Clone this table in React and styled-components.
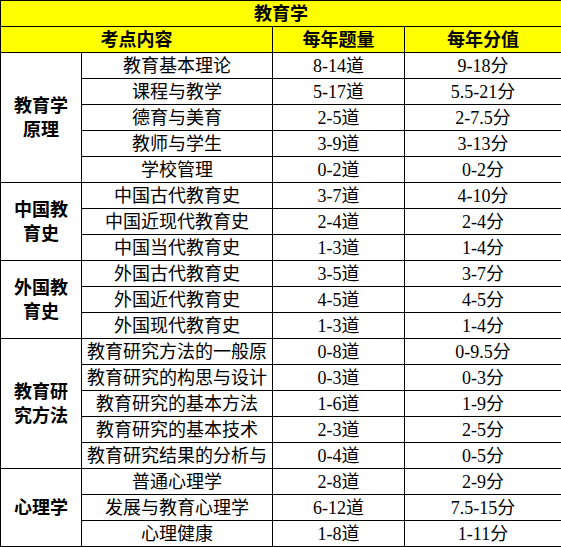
import styled, { createGlobalStyle } from "styled-components";

const GlobalStyle = createGlobalStyle`
  html, body {
    margin: 0;
    padding: 0;
    background: #ffffff;
  }
  body {
    font-family: "Liberation Serif", "Noto Sans CJK SC", serif;
  }
`;

const groups = [
  {
    name: ["教育学", "原理"],
    items: [
      ["教育基本理论", "8-14道", "9-18分"],
      ["课程与教学", "5-17道", "5.5-21分"],
      ["德育与美育", "2-5道", "2-7.5分"],
      ["教师与学生", "3-9道", "3-13分"],
      ["学校管理", "0-2道", "0-2分"],
    ],
  },
  {
    name: ["中国教", "育史"],
    items: [
      ["中国古代教育史", "3-7道", "4-10分"],
      ["中国近现代教育史", "2-4道", "2-4分"],
      ["中国当代教育史", "1-3道", "1-4分"],
    ],
  },
  {
    name: ["外国教", "育史"],
    items: [
      ["外国古代教育史", "3-5道", "3-7分"],
      ["外国近代教育史", "4-5道", "4-5分"],
      ["外国现代教育史", "1-3道", "1-4分"],
    ],
  },
  {
    name: ["教育研", "究方法"],
    items: [
      ["教育研究方法的一般原", "0-8道", "0-9.5分"],
      ["教育研究的构思与设计", "0-3道", "0-3分"],
      ["教育研究的基本方法", "1-6道", "1-9分"],
      ["教育研究的基本技术", "2-3道", "2-5分"],
      ["教育研究结果的分析与", "0-4道", "0-5分"],
    ],
  },
  {
    name: ["心理学"],
    items: [
      ["普通心理学", "2-8道", "2-9分"],
      ["发展与教育心理学", "6-12道", "7.5-15分"],
      ["心理健康", "1-8道", "1-11分"],
    ],
  },
];

const Table = styled.table`
  width: 561px;
  border-collapse: collapse;
  table-layout: fixed;
  font-family: "Liberation Serif", "Noto Sans CJK SC", serif;
  font-size: 18px;
  color: #000000;
`;

const Row = styled.tr`
  height: 26px;
`;

const HeadCell = styled.th`
  background: #ffff00;
  border: 1px solid #000000;
  font-weight: bold;
  text-align: center;
  vertical-align: middle;
  padding: 0;
  line-height: 24px;
`;

const Cell = styled.td`
  border: 1px solid #000000;
  text-align: center;
  vertical-align: middle;
  padding: 0;
  line-height: 24px;
  white-space: nowrap;
  overflow: hidden;
`;

const GroupCell = styled.td`
  border: 1px solid #000000;
  text-align: center;
  vertical-align: middle;
  padding: 0;
  font-weight: bold;
  line-height: 24px;
`;

export default function App() {
  return (
    <>
      <GlobalStyle />
      <Table>
        <colgroup>
          <col style={{ width: 81 }} />
          <col style={{ width: 191 }} />
          <col style={{ width: 132 }} />
          <col style={{ width: 157 }} />
        </colgroup>
        <thead>
          <Row>
            <HeadCell colSpan={4}>教育学</HeadCell>
          </Row>
          <Row>
            <HeadCell colSpan={2}>考点内容</HeadCell>
            <HeadCell>每年题量</HeadCell>
            <HeadCell>每年分值</HeadCell>
          </Row>
        </thead>
        <tbody>
          {groups.map((g) =>
            g.items.map((item, i) => (
              <Row key={g.name.join("") + i}>
                {i === 0 && (
                  <GroupCell rowSpan={g.items.length}>
                    {g.name.map((line) => (
                      <div key={line}>{line}</div>
                    ))}
                  </GroupCell>
                )}
                <Cell>{item[0]}</Cell>
                <Cell>{item[1]}</Cell>
                <Cell>{item[2]}</Cell>
              </Row>
            ))
          )}
        </tbody>
      </Table>
    </>
  );
}
